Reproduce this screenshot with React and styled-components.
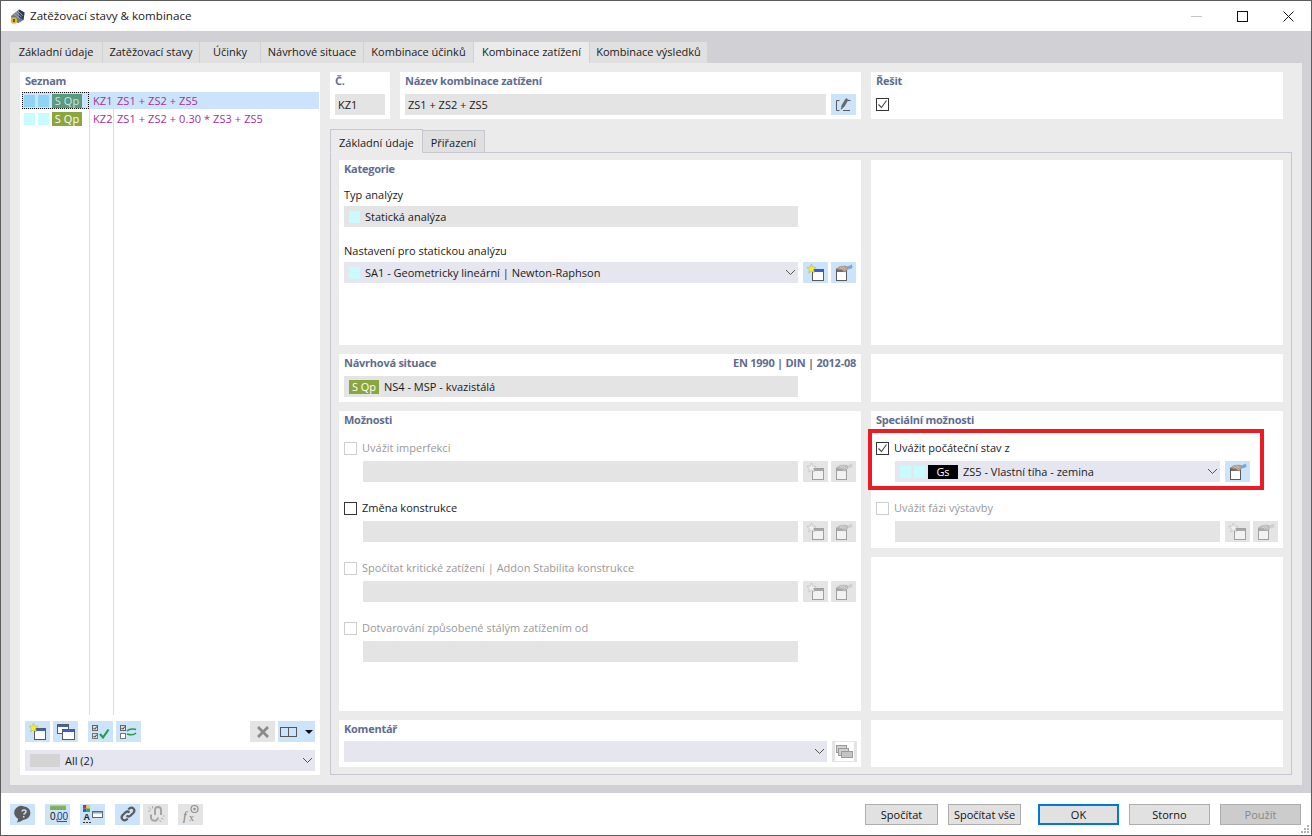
import React from 'react'
import styled, { createGlobalStyle } from 'styled-components'

const GlobalStyle = createGlobalStyle`
  html, body { margin: 0; padding: 0; background: #fff; }
  * { box-sizing: border-box; }
  body { font-family: "Open Sans", "Liberation Sans", sans-serif; font-size: 11px; color: #1a1a1a; }
`

const Chevron = () => (
  <svg width="11" height="7" viewBox="0 0 11 7" fill="none" stroke="#555" strokeWidth="1">
    <path d="M1 1l4.500 4.500L10 1" />
  </svg>
)

const Check = () => (
  <svg width="11" height="11" viewBox="0 0 11 11" fill="none" stroke="#444" strokeWidth="1.100">
    <path d="M1.500 5.500l3 3 5-7" />
  </svg>
)

const StarWindow = ({ off }) => (
  <svg width="20" height="18" viewBox="0 0 20 18">
    <rect x="6.500" y="5.500" width="11" height="11" fill={off ? '#f2f2f2' : '#fff'} stroke={off ? '#a0a0a0' : '#5a5a5a'} />
    <rect x="7" y="6" width="10" height="2" fill={off ? '#a8a8a8' : '#3a5fd0'} />
    <path d="M5.500 0l1.300 3.100 3.300.3-2.500 2.200.8 3.300-2.900-1.700-2.900 1.700.8-3.300L.9 3.400l3.300-.3z" fill={off ? '#efefef' : '#f7f01e'} stroke={off ? '#b0b0b0' : '#a8a878'} strokeWidth=".5" />
  </svg>
)

const HandWindow = ({ off }) => (
  <svg width="20" height="18" viewBox="0 0 20 18">
    <rect x="2.500" y="5.500" width="10" height="11" fill={off ? '#f2f2f2' : '#fff'} stroke={off ? '#a0a0a0' : '#5a5a5a'} />
    <rect x="3" y="6" width="9" height="2" fill={off ? '#a8a8a8' : '#6f6f6f'} />
    <path d="M2 5l4-2.500 5-.5 3.500 1-1 2.500-2 2.500-2.500-.5-1-2-2 .5z" fill={off ? '#bdbdbd' : '#b59e8c'} stroke={off ? '#a8a8a8' : '#8a7464'} strokeWidth=".4" />
    <path d="M6 3.500l3 2M8.500 2.800l3 2.200" stroke={off ? '#e4e4e4' : '#e2d4c8'} strokeWidth=".7" />
    <path d="M13.500 2.500L18 .5l.5 3.500-4 1.500z" fill={off ? '#cfcfcf' : '#7fa4d8'} />
  </svg>
)

const CascadeIcon = () => (
  <svg width="20" height="18" viewBox="0 0 20 18">
    <rect x="1.500" y="1.500" width="11" height="9" fill="#fff" stroke="#5a5a5a" />
    <rect x="2" y="2" width="10" height="2" fill="#3a5fd0" />
    <rect x="6.500" y="6.500" width="12" height="10" fill="#fff" stroke="#5a5a5a" />
    <rect x="7" y="7" width="11" height="2" fill="#3a5fd0" />
  </svg>
)

const StackIcon = () => (
  <svg width="19" height="19" viewBox="0 0 19 19">
    <rect width="19" height="19" fill="#fff" />
    <rect x="1.500" y="3.500" width="10" height="7" fill="#d0d0d0" stroke="#9a9a9a" />
    <rect x="3.500" y="6.500" width="10" height="7" fill="#d0d0d0" stroke="#9a9a9a" />
    <rect x="6.500" y="9.500" width="11" height="6" fill="#c4c4c4" stroke="#9a9a9a" />
  </svg>
)

const EditIcon = () => (
  <svg width="18" height="16" viewBox="0 0 18 16" fill="none">
    <path d="M4.500 3.500h-3v10h3M8 13.500h7M13 3.500h2.500" stroke="#5a5a5a" strokeWidth="1" />
    <path d="M6 12.500l1-4.500L11 1.500l2.200 1.200-3.800 6.500z" fill="#6a6a6a" stroke="#4a4a4a" strokeWidth=".4" />
  </svg>
)

const ChecksIcon = ({ swap }) => (
  <svg width="20" height="18" viewBox="0 0 20 18" fill="none">
    <rect x="1.500" y="2.500" width="5" height="5" fill="#ddd" stroke="#666" />
    <path d="M2.500 5l1.200 1.200L6 3.500" stroke="#333" />
    <rect x="1.500" y="10.500" width="5" height="5" fill={swap ? '#fff' : '#ddd'} stroke="#777" />
    {!swap && <path d="M2.500 13l1.200 1.200L6 11.500" stroke="#333" />}
    {swap ? (
      <path d="M8 8c3-3 6-2 9-1.500M17 10c-3 3-6 2-9 1" stroke="#2a9a4a" strokeWidth="1.600" />
    ) : (
      <path d="M9 11l3 3.500 5.500-8" stroke="#1fa34a" strokeWidth="2.200" />
    )}
  </svg>
)

const CloseIcon = () => (
  <svg width="14" height="14" viewBox="0 0 14 14" stroke="#8a8a8a" strokeWidth="2.800">
    <path d="M2 2l10 10M12 2L2 12" />
  </svg>
)

const HelpIcon = () => (
  <svg width="18" height="18" viewBox="0 0 18 18">
    <path d="M10 1.500a6.500 6.500 0 0 1 1 12.900c-2 .3-3 .8-4 1.800l-4 1.300 1.200-3.500A6.500 6.500 0 0 1 10 1.500z" fill="#5c5c5c" />
    <path d="M8 6.500c.2-2 4.200-2 4 .2-.1 1.400-2 1.500-2.200 3M9.700 11v1.500" stroke="#cbe4f9" strokeWidth="1.500" fill="none" />
  </svg>
)

const UnitsIcon = () => (
  <svg width="20" height="21" viewBox="0 0 20 21">
    <rect x="2" y="1.500" width="16" height="4.500" fill="#88b85a" />
    <path d="M4 3v3M7 3v3M10 3v3M13 3v3M16 3v3" stroke="#5f9636" strokeWidth=".7" />
    <text x="2" y="15.500" fontSize="10" fontFamily="Liberation Sans, sans-serif" fill="#111">0,</text>
    <text x="9" y="15.500" fontSize="10" fontFamily="Liberation Sans, sans-serif" fill="#203a8f">00</text>
    <path d="M9 17.500h10" stroke="#2a4fb0" />
  </svg>
)

const ColorsIcon = () => (
  <svg width="22" height="20" viewBox="0 0 22 20">
    <rect x="1" y="1" width="3.500" height="3.500" fill="#d92a2a" />
    <rect x="4.500" y="1" width="3.500" height="3.500" fill="#f1d21e" />
    <rect x="1" y="4.500" width="3.500" height="3.500" fill="#2b5fd9" />
    <rect x="4.500" y="4.500" width="3.500" height="3.500" fill="#39a845" />
    <text x="1.500" y="16" fontSize="9" fontWeight="700" fontFamily="Liberation Sans, sans-serif" fill="#222">A</text>
    <path d="M1 18.500h2M4 18.500h2M7 18.500h2" stroke="#333" />
    <rect x="10.500" y="7.500" width="10" height="6" fill="#fff" stroke="#666" />
    <rect x="11" y="8" width="9" height="1.500" fill="#8aa4d8" />
  </svg>
)

const LinkIcon = () => (
  <svg width="18" height="18" viewBox="0 0 18 18" fill="none" stroke="#5c5c5c" strokeWidth="2.200">
    <path d="M7.500 10.500a3 3 0 0 0 4.200 0l3-3a3 3 0 0 0-4.200-4.200l-1.200 1.200" />
    <path d="M10.500 7.500a3 3 0 0 0-4.200 0l-3 3a3 3 0 0 0 4.200 4.200l1.200-1.200" />
  </svg>
)

const UnlinkIcon = () => (
  <svg width="18" height="18" viewBox="0 0 18 18" fill="none" stroke="#a4a4a4" strokeWidth="2">
    <path d="M8 10V5a3 3 0 0 1 6 0v5" />
    <path d="M4 9.500v2.500a3.500 3.500 0 0 0 7 .5" />
    <path d="M2 2.500l2 2M5.500 1v2.500M1 6h2.500M14 13l2.500 1.500M12.500 15l1.500 2M16 11h1.500" strokeWidth=".9" />
  </svg>
)

const FormulaIcon = () => (
  <svg width="20" height="20" viewBox="0 0 20 20">
    <text x="2" y="16" fontSize="13" fontStyle="italic" fontFamily="Liberation Serif, serif" fill="#808080">f</text>
    <text x="8" y="17" fontSize="10" fontFamily="Liberation Serif, serif" fill="#808080">x</text>
    <circle cx="13.500" cy="5" r="3.500" fill="none" stroke="#909090" strokeWidth="1.200" />
    <circle cx="13.500" cy="5" r="1.300" fill="#909090" />
  </svg>
)

const AppLogo = () => (
  <svg width="17" height="17" viewBox="0 0 17 17">
    <path d="M2 8l8-6.500 5.500 3-1 7.500-5 3-6.500-2z" fill="#67788f" />
    <path d="M10 1.500l5.500 3-1 7.500-4.500-3z" fill="#2f3a4a" />
    <path d="M4.500 5.500l6 5M6.500 4l6 5M8.500 2.700l5.500 5" stroke="#b4c2d2" strokeWidth=".8" />
    <circle cx="5" cy="12.500" r="3.200" fill="#e0b23a" />
    <rect x="4" y="11" width="2" height="3" fill="#7a5a10" />
  </svg>
)

const Window = styled.div`
  position: relative;
  width: 1312px;
  height: 836px;
  border: 1px solid #5c5c5c;
  display: flex;
  flex-direction: column;
  overflow: hidden;
`

const TitleBar = styled.div`
  height: 30px;
  flex: none;
  display: flex;
  align-items: center;
  padding-left: 8px;
  gap: 4px;
  font-size: 11.6px;
  background: #fff;
`

const TitleText = styled.span`
  margin-bottom: 2px;
`

const WindowControls = styled.div`
  margin-left: auto;
  display: flex;
  align-items: center;
`

const WindowControl = styled.div`
  width: 46px;
  height: 30px;
  display: flex;
  align-items: center;
  justify-content: center;
`

const Band = styled.div`
  flex: none;
  height: 762px;
  background: #d0d0d5;
  padding: 11px 9px 8px;
  display: flex;
  flex-direction: column;
`

const TabStrip = styled.div`
  display: flex;
  height: 21px;
  flex: none;
`

const Tab = styled.div`
  width: ${p => p.$w}px;
  margin-right: 1px;
  padding-bottom: 2px;
  display: flex;
  align-items: center;
  justify-content: center;
  white-space: nowrap;
  background: ${p => (p.$active ? '#ebebeb' : '#e0e0e0')};
`

const TabBody = styled.div`
  flex: 1;
  min-height: 0;
  background: #ebebeb;
  padding: 9px 10px 10px;
  display: flex;
  gap: 10px;
`

const ListPanel = styled.div`
  width: 300px;
  flex: none;
  background: #fff;
  padding: 2px 1px 4px 2px;
  display: flex;
  flex-direction: column;
`

const Heading = styled.div`
  font-weight: 700;
  color: #5f6c90;
  letter-spacing: -0.25px;
  height: 16px;
  line-height: 14px;
  display: flex;
  justify-content: space-between;
`

const ListHeading = styled(Heading)`
  padding-left: 3px;
  height: 18px;
  line-height: 13px;
`

const ListBody = styled.div`
  position: relative;
  flex: 1;
  min-height: 0;
  padding-bottom: 6px;
`

const ListRows = styled.div`
  display: flex;
  flex-direction: column;
  gap: 1px;
`

const Divider = styled.div`
  position: absolute;
  top: 0;
  bottom: 6px;
  left: ${p => p.$x}px;
  width: 1px;
  background: #dcdcdc;
`

const ListRow = styled.div`
  height: 17px;
  display: flex;
  align-items: center;
  background: ${p => (p.$selected ? '#cce4fb' : 'transparent')};
  color: #a5309a;
  letter-spacing: 0.07px;
`

const RowMarks = styled.div`
  width: 67px;
  height: 17px;
  display: flex;
  align-items: center;
  gap: 3px;
  padding-left: 1px;
  border: ${p => (p.$focus ? '1px dotted #111' : '1px solid transparent')};
  margin-right: 4px;
`

const Swatch = styled.span`
  width: 11px;
  height: 12px;
  flex: none;
  background: ${p => p.$c};
`

const Badge = styled.span`
  width: 30px;
  height: 14px;
  flex: none;
  display: flex;
  align-items: center;
  justify-content: center;
  background: ${p => p.$c};
  color: ${p => p.$t || '#fff'};
  font-size: 11px;
`

const MarkGroup = styled.span`
  display: flex;
  align-items: center;
  gap: 3px;
`

const RowCode = styled.span`
  width: 24px;
  flex: none;
`

const ListToolbar = styled.div`
  display: flex;
  gap: 3px;
  padding: 0 3px;
  flex: none;
`

const ToolGap = styled.div`
  width: ${p => p.$w}px;
  flex: none;
`

const IconButton = styled.div`
  width: ${p => p.$w || 25}px;
  height: 21px;
  flex: none;
  display: flex;
  align-items: center;
  justify-content: center;
  gap: 8px;
  background: ${p => (p.$off ? '#e4e4e4' : '#cbe4f9')};
`

const Split = styled.span`
  width: 17px;
  height: 10px;
  border: 1px solid #555;
  background: linear-gradient(#555, #555) center / 1px 100% no-repeat;
`

const Caret = styled.span`
  width: 0;
  height: 0;
  border-left: 4px solid transparent;
  border-right: 4px solid transparent;
  border-top: 4px solid #111;
`

const Field = styled.div`
  height: 21px;
  width: ${p => (p.$w ? `${p.$w}px` : 'auto')};
  flex: ${p => (p.$w ? 'none' : '1')};
  display: flex;
  align-items: center;
  gap: 5px;
  padding: 0 ${p => (p.$pad === undefined ? 5 : p.$pad)}px;
  background: ${p => (p.$select ? '#e6e6f0' : '#e4e4e4')};
  white-space: nowrap;
`

const ChevronSlot = styled.span`
  margin-left: auto;
  margin-right: -3px;
  display: flex;
`

const ListFilter = styled(Field)`
  margin: 8px 4px 0 3px;
  flex: none;
`

const GraySwatch = styled.span`
  width: 30px;
  height: 13px;
  background: #d4d4d4;
`

const Main = styled.div`
  flex: 1;
  min-width: 0;
  display: flex;
  flex-direction: column;
`

const TopRow = styled.div`
  display: flex;
  gap: 10px;
  height: 47px;
  flex: none;
`

const TopCard = styled.div`
  width: ${p => p.$w}px;
  background: #fff;
  padding: 2px 5px;
  display: flex;
  flex-direction: column;
  gap: 4px;
`

const TopField = styled.div`
  display: flex;
  gap: 5px;
  align-items: center;
  height: 21px;
`

const InnerTabs = styled.div`
  display: flex;
  margin-top: 10px;
  height: 23px;
  flex: none;
`

const InnerTab = styled.div`
  padding: 2px 8px 0;
  display: flex;
  align-items: center;
  border: 1px solid #c6c6d0;
  border-bottom: 1px solid ${p => (p.$active ? '#ebebeb' : '#c6c6d0')};
  border-left: ${p => (p.$active ? '1px solid #c6c6d0' : 'none')};
  background: ${p => (p.$active ? '#ebebeb' : '#e0e0e0')};
  margin-top: ${p => (p.$active ? 0 : 1)}px;
  position: relative;
  z-index: 1;
  margin-bottom: -1px;
`

const InnerPanel = styled.div`
  flex: 1;
  min-height: 0;
  border: 1px solid #c6c6d0;
  padding: 7px 8px;
  display: flex;
  gap: 10px;
`

const Column = styled.div`
  width: ${p => p.$w}px;
  flex: none;
  display: flex;
  flex-direction: column;
  gap: 9px;
`

const Card = styled.div`
  position: relative;
  height: ${p => (p.$h ? `${p.$h}px` : 'auto')};
  flex: ${p => (p.$h ? 'none' : '1')};
  background: #fff;
  padding: 2px 5px;
`

const Label = styled.div`
  height: 16px;
  line-height: 16px;
  margin-top: ${p => p.$top || 0}px;
  margin-bottom: 3px;
`

const FieldRow = styled.div`
  display: flex;
  gap: 5px;
  margin-top: ${p => p.$top || 0}px;
`

const ButtonPair = styled.div`
  display: flex;
  gap: 3px;
`

const OptionGroup = styled.div`
  margin-top: 12px;
  display: flex;
  flex-direction: column;
`

const Option = styled.div`
  height: 60px;
`

const CheckLine = styled.div`
  height: 14px;
  display: flex;
  align-items: center;
  gap: 5px;
  margin-bottom: 6px;
  color: ${p => (p.$off ? '#999' : '#1a1a1a')};
`

const CheckText = styled.span`
  margin-bottom: 2px;
`

const Box = styled.span`
  width: 13px;
  height: 13px;
  flex: none;
  display: flex;
  align-items: center;
  justify-content: center;
  background: #fff;
  border: 1px solid ${p => (p.$off ? '#cdcdcd' : '#333')};
`

const OptionField = styled.div`
  display: flex;
  gap: 5px;
  padding-left: 19px;
`

const Highlight = styled.div`
  position: absolute;
  left: -3px;
  top: 18px;
  width: 396px;
  height: 61px;
  border: 4px solid #ed1c24;
  pointer-events: none;
`

const Footer = styled.div`
  flex: 1;
  display: flex;
  align-items: center;
  padding: 0 10px 0 9px;
  background: #fff;
`

const FooterTools = styled.div`
  display: flex;
  gap: 10px;
`

const ToolPair = styled.div`
  display: flex;
  gap: 3px;
`

const FooterActions = styled.div`
  margin-left: auto;
  display: flex;
  align-items: center;
`

const ActionButton = styled.div`
  width: ${p => p.$w}px;
  height: 21px;
  margin-left: ${p => p.$gap || 0}px;
  display: flex;
  align-items: center;
  justify-content: center;
  background: ${p => (p.$off ? '#cccccc' : '#e1e1e1')};
  border: ${p => (p.$primary ? '2px solid #0078d7' : '1px solid #adadad')};
  color: ${p => (p.$off ? '#888' : '#111')};
`

const Grip = styled.svg`
  position: absolute;
  right: 1px;
  bottom: 1px;
`

const rows = [
  { code: 'KZ1', text: 'ZS1 + ZS2 + ZS5', selected: true },
  { code: 'KZ2', text: 'ZS1 + ZS2 + 0.30 * ZS3 + ZS5' },
]

const tabs = [
  ['Základní údaje', 92],
  ['Zatěžovací stavy', 96],
  ['Účinky', 60],
  ['Návrhové situace', 102],
  ['Kombinace účinků', 109],
  ['Kombinace zatížení', 115, true],
  ['Kombinace výsledků', 117],
]

const options = [
  { label: 'Uvážit imperfekci', off: true },
  { label: 'Změna konstrukce' },
  { label: 'Spočítat kritické zatížení | Addon Stabilita konstrukce', off: true },
  { label: 'Dotvarování způsobené stálým zatížením od', off: true, plain: true },
]

const OffPair = () => (
  <ButtonPair>
    <IconButton $off><StarWindow off /></IconButton>
    <IconButton $off><HandWindow off /></IconButton>
  </ButtonPair>
)

const App = () => (
  <Window>
    <GlobalStyle />
    <TitleBar>
      <AppLogo />
      <TitleText>Zatěžovací stavy &amp; kombinace</TitleText>
      <WindowControls>
        <WindowControl>
          <svg width="11" height="1"><rect width="11" height="1" fill="#c4c4c4" /></svg>
        </WindowControl>
        <WindowControl>
          <svg width="11" height="11" fill="none" stroke="#111"><rect x=".5" y=".5" width="10" height="10" /></svg>
        </WindowControl>
        <WindowControl>
          <svg width="11" height="11" fill="none" stroke="#111"><path d="M.5.5l10 10M10.500.5l-10 10" /></svg>
        </WindowControl>
      </WindowControls>
    </TitleBar>

    <Band>
      <TabStrip>
        {tabs.map(([name, w, active]) => (
          <Tab key={name} $w={w} $active={active}>{name}</Tab>
        ))}
      </TabStrip>
      <TabBody>
        <ListPanel>
          <ListHeading>Seznam</ListHeading>
          <ListBody>
            <Divider $x={67} />
            <Divider $x={91} />
            <ListRows>
              {rows.map(r => (
                <ListRow key={r.code} $selected={r.selected}>
                  <RowMarks $focus={r.selected}>
                    <Swatch $c={r.selected ? '#8fd4f5' : '#c8fbfd'} />
                    <Swatch $c={r.selected ? '#8fd4f5' : '#c8fbfd'} />
                    <Badge $c={r.selected ? '#5a9a80' : '#8aa63e'} $t={r.selected ? '#cfe4e0' : '#fff'}>S Qp</Badge>
                  </RowMarks>
                  <RowCode>{r.code}</RowCode>
                  {r.text}
                </ListRow>
              ))}
            </ListRows>
          </ListBody>
          <ListToolbar>
            <IconButton><StarWindow /></IconButton>
            <IconButton><CascadeIcon /></IconButton>
            <ToolGap $w={4} />
            <IconButton><ChecksIcon /></IconButton>
            <IconButton><ChecksIcon swap /></IconButton>
            <ToolGap $w={103} />
            <IconButton $off><CloseIcon /></IconButton>
            <IconButton $w={37}><Split /><Caret /></IconButton>
          </ListToolbar>
          <ListFilter $select>
            <GraySwatch />
            All (2)
            <ChevronSlot><Chevron /></ChevronSlot>
          </ListFilter>
        </ListPanel>

        <Main>
          <TopRow>
            <TopCard $w={60}>
              <Heading>Č.</Heading>
              <Field $w={50} $pad={3}>KZ1</Field>
            </TopCard>
            <TopCard $w={461}>
              <Heading>Název kombinace zatížení</Heading>
              <TopField>
                <Field $pad={3}>ZS1 + ZS2 + ZS5</Field>
                <IconButton><EditIcon /></IconButton>
              </TopField>
            </TopCard>
            <TopCard $w={412}>
              <Heading>Řešit</Heading>
              <TopField><Box><Check /></Box></TopField>
            </TopCard>
          </TopRow>

          <InnerTabs>
            <InnerTab $active>Základní údaje</InnerTab>
            <InnerTab>Přiřazení</InnerTab>
          </InnerTabs>

          <InnerPanel>
            <Column $w={522}>
              <Card $h={185}>
                <Heading>Kategorie</Heading>
                <Label $top={9}>Typ analýzy</Label>
                <Field $w={454}>
                  <Swatch $c="#c8fbfd" />
                  Statická analýza
                </Field>
                <Label $top={16}>Nastavení pro statickou analýzu</Label>
                <FieldRow>
                  <Field $w={454} $select>
                    <Swatch $c="#c8fbfd" />
                    SA1 - Geometricky lineární | Newton-Raphson
                    <ChevronSlot><Chevron /></ChevronSlot>
                  </Field>
                  <ButtonPair>
                    <IconButton><StarWindow /></IconButton>
                    <IconButton><HandWindow /></IconButton>
                  </ButtonPair>
                </FieldRow>
              </Card>
              <Card $h={48}>
                <Heading>
                  Návrhová situace
                  <span>EN 1990 | DIN | 2012-08</span>
                </Heading>
                <FieldRow $top={4}>
                  <Field $w={454}>
                    <Badge $c="#8aa63e">S Qp</Badge>
                    NS4 - MSP - kvazistálá
                  </Field>
                </FieldRow>
              </Card>
              <Card>
                <Heading>Možnosti</Heading>
                <OptionGroup>
                  {options.map(o => (
                    <Option key={o.label}>
                      <CheckLine $off={o.off}>
                        <Box $off={o.off} />
                        <CheckText>{o.label}</CheckText>
                      </CheckLine>
                      <OptionField>
                        <Field $w={435} />
                        {!o.plain && <OffPair />}
                      </OptionField>
                    </Option>
                  ))}
                </OptionGroup>
              </Card>
              <Card $h={47}>
                <Heading>Komentář</Heading>
                <FieldRow $top={3}>
                  <Field $w={483} $select>
                    <ChevronSlot><Chevron /></ChevronSlot>
                  </Field>
                  <IconButton $off><StackIcon /></IconButton>
                </FieldRow>
              </Card>
            </Column>

            <Column $w={412}>
              <Card $h={185} />
              <Card $h={48} />
              <Card $h={137}>
                <Heading>Speciální možnosti</Heading>
                <OptionGroup>
                  <Option>
                    <CheckLine>
                      <Box><Check /></Box>
                      <CheckText>Uvážit počáteční stav z</CheckText>
                    </CheckLine>
                    <OptionField>
                      <Field $w={325} $select>
                        <MarkGroup>
                          <Swatch $c="#c8fbfd" />
                          <Swatch $c="#c8fbfd" />
                          <Badge $c="#000">Gs</Badge>
                        </MarkGroup>
                        ZS5 - Vlastní tíha - zemina
                        <ChevronSlot><Chevron /></ChevronSlot>
                      </Field>
                      <IconButton><HandWindow /></IconButton>
                    </OptionField>
                  </Option>
                  <Option>
                    <CheckLine $off>
                      <Box $off />
                      <CheckText>Uvážit fázi výstavby</CheckText>
                    </CheckLine>
                    <OptionField>
                      <Field $w={325} />
                      <OffPair />
                    </OptionField>
                  </Option>
                </OptionGroup>
                <Highlight />
              </Card>
              <Card />
              <Card $h={47} />
            </Column>
          </InnerPanel>
        </Main>
      </TabBody>
    </Band>

    <Footer>
      <FooterTools>
        <IconButton><HelpIcon /></IconButton>
        <IconButton><UnitsIcon /></IconButton>
        <IconButton><ColorsIcon /></IconButton>
        <ToolPair>
          <IconButton><LinkIcon /></IconButton>
          <IconButton $off><UnlinkIcon /></IconButton>
        </ToolPair>
        <IconButton $off><FormulaIcon /></IconButton>
      </FooterTools>
      <FooterActions>
        <ActionButton $w={73}>Spočítat</ActionButton>
        <ActionButton $w={73} $gap={10}>Spočítat vše</ActionButton>
        <ActionButton $w={81} $gap={17} $primary>OK</ActionButton>
        <ActionButton $w={81} $gap={10}>Storno</ActionButton>
        <ActionButton $w={81} $gap={10} $off>Použít</ActionButton>
      </FooterActions>
    </Footer>
    <Grip width="10" height="10" viewBox="0 0 10 10" fill="#b0b0b0">
      <rect x="7" y="1" width="2" height="2" />
      <rect x="4" y="4" width="2" height="2" />
      <rect x="7" y="4" width="2" height="2" />
      <rect x="1" y="7" width="2" height="2" />
      <rect x="4" y="7" width="2" height="2" />
      <rect x="7" y="7" width="2" height="2" />
    </Grip>
  </Window>
)

export default App
